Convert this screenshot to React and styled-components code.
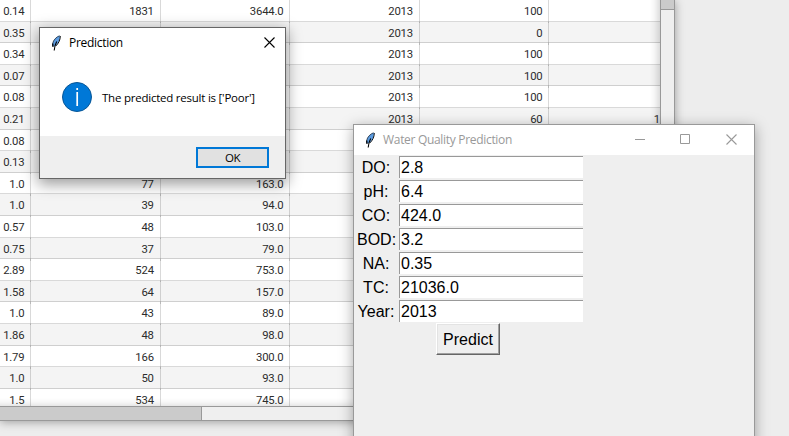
import React from "react";
import styled, { createGlobalStyle } from "styled-components";

const Global = createGlobalStyle`
  * { box-sizing: border-box; }
  html, body { margin: 0; overflow: hidden; background: #ededed; }
`;

const Desktop = styled.main`
  position: relative;
  width: 789px;
  height: 436px;
  overflow: hidden;
  background: #ededed;
`;

const TableWindow = styled.section`
  width: 675px;
  height: 421px;
  display: grid;
  grid-template-columns: 660px 14px;
  grid-template-rows: 406px 14px;
  border-right: 1px solid #999;
  border-bottom: 1px solid #999;
  box-shadow: 0 1px 9px rgba(0, 0, 0, 0.35);
  background: #efefef;
`;

const TableView = styled.div`
  overflow: hidden;
  background: #fff;
  box-shadow: inset -7px -5px 8px -5px rgba(0, 0, 0, 0.2);
`;

const Row = styled.div`
  display: grid;
  grid-template-columns: 31.4px 129.4px 129.6px 129.5px 129.6px 110.5px;
  height: 21.6px;
  background: ${(p) => (p.$odd ? "rgba(0, 0, 0, 0.043)" : "transparent")};
  border-bottom: 1px solid rgba(0, 0, 0, 0.15);
`;

const Cell = styled.div`
  padding-right: 6px;
  border-right: 1px solid rgba(0, 0, 0, 0.15);
  color: #2c2c2c;
  font: 11.3px/23px Roboto, "Liberation Sans", sans-serif;
  letter-spacing: -0.2px;
  text-align: right;
  white-space: nowrap;

  &:last-child { padding-right: 0; border-right: 0; }
`;

const VerticalTrack = styled.div`
  border-left: 1px solid #999;
  background: #efefef;
`;

const VerticalThumb = styled.div`
  height: 10px;
  background: #cbcbcb;
  border-bottom: 1px solid #999;
`;

const HorizontalTrack = styled.div`
  grid-column: 1 / -1;
  border-top: 1px solid #999;
  background: #efefef;
`;

const HorizontalThumb = styled.div`
  width: 202px;
  height: 100%;
  background: #cbcbcb;
  border-right: 1px solid #999;
`;

const Window = styled.section`
  position: absolute;
  display: flex;
  flex-direction: column;
  background: #efefef;
`;

const FormWindow = styled(Window)`
  left: 353px;
  top: 124px;
  width: 402px;
  height: 330px;
  border: 1px solid #999;
  box-shadow: 0 3px 13px rgba(0, 0, 0, 0.34);
`;

const Dialog = styled(Window)`
  left: 39px;
  top: 27px;
  width: 247px;
  height: 152px;
  border: 1px solid #666;
  box-shadow: 0 4px 14px 1px rgba(0, 0, 0, 0.4);
`;

const TitleBar = styled.header`
  display: flex;
  align-items: center;
  height: 30px;
  flex: none;
  padding-left: 8px;
  background: #fff;
`;

const Title = styled.div`
  flex: 1;
  margin-left: 5px;
  color: ${(p) => (p.$active ? "#000" : "#999")};
  font: 12px/16px "Open Sans", sans-serif;
  letter-spacing: ${(p) => (p.$active ? "-0.3px" : "-0.31px")};
  white-space: nowrap;
`;

const Control = styled.div`
  width: ${(p) => (p.$narrow ? "31px" : "45.5px")};
  height: 30px;
  padding-bottom: 1px;
  display: grid;
  place-items: center;
`;

const Form = styled.div`
  padding: 1px 0 0 3px;
`;

const Field = styled.label`
  display: grid;
  grid-template-columns: 39px 184px;
  column-gap: 3px;
  height: 24px;
  color: #000;
  font: 16px/24px "Liberation Sans", Arial, sans-serif;
`;

const FieldName = styled.span`
  padding-right: 1px;
  text-align: center;
  white-space: nowrap;
`;

const Entry = styled.input`
  width: 184px;
  height: 22px;
  padding: 0 1px;
  border: 0;
  border-top: 1px solid #999;
  border-left: 1px solid #999;
  border-radius: 0;
  outline: 0;
  background: #fff;
  color: #000;
  font: 16px/21px "Liberation Sans", Arial, sans-serif;
`;

const PredictButton = styled.button`
  display: block;
  width: 64px;
  height: 32px;
  margin: -1px 0 0 79px;
  padding: 2px 0 0;
  border: 1px solid;
  border-color: #fff #666 #666 #fff;
  box-shadow: inset -1px -1px #a0a0a0, inset 1px 1px #e3e3e3;
  background: #efefef;
  color: #000;
  font: 16px/28px "Liberation Sans", Arial, sans-serif;
`;

const DialogBody = styled.div`
  display: flex;
  align-items: center;
  height: 78px;
  padding-left: 22px;
  background: #fff;
`;

const Message = styled.div`
  margin: 1px 0 0 10px;
  color: #000;
  font: 11.5px/16px "Open Sans", sans-serif;
  letter-spacing: -0.23px;
  white-space: nowrap;
`;

const DialogFooter = styled.footer`
  display: flex;
  justify-content: flex-end;
  flex: 1;
  padding: 11px 16px 0 0;
`;

const OkButton = styled.button`
  width: 73px;
  height: 21px;
  padding: 0;
  border: 2px solid #0078d7;
  border-radius: 0;
  background: #e1e1e1;
  color: #000;
  font: 11.5px/16px "Open Sans", sans-serif;
  letter-spacing: -0.5px;
`;

const rows = [
  ["0.14", "1831", "3644.0", "2013", "100", ""],
  ["0.35", "", "", "2013", "0", ""],
  ["0.34", "", "", "2013", "100", ""],
  ["0.07", "", "", "2013", "100", ""],
  ["0.08", "", "", "2013", "100", ""],
  ["0.21", "", "", "2013", "60", "1"],
  ["0.08", "", "", "", "", ""],
  ["0.13", "", "", "", "", ""],
  ["1.0", "77", "163.0", "", "", ""],
  ["1.0", "39", "94.0", "", "", ""],
  ["0.57", "48", "103.0", "", "", ""],
  ["0.75", "37", "79.0", "", "", ""],
  ["2.89", "524", "753.0", "", "", ""],
  ["1.58", "64", "157.0", "", "", ""],
  ["1.0", "43", "89.0", "", "", ""],
  ["1.86", "48", "98.0", "", "", ""],
  ["1.79", "166", "300.0", "", "", ""],
  ["1.0", "50", "93.0", "", "", ""],
  ["1.5", "534", "745.0", "", "", ""],
];

const fields = [
  ["DO:", "2.8"],
  ["pH:", "6.4"],
  ["CO:", "424.0"],
  ["BOD:", "3.2"],
  ["NA:", "0.35"],
  ["TC:", "21036.0"],
  ["Year:", "2013"],
];

function Feather() {
  return (
    <svg width="16" height="16" viewBox="0 0 16 16">
      <path d="M12 .8C8.8 1.4 5.6 4.6 4.9 8.2L4.4 11 6.8 11.3C9.9 9.2 12 5.5 12.2 1Z" fill="#5b9be0" />
      <path d="M11.5.8C8.4 1.8 5.2 5.2 4.7 8.5V11" fill="none" stroke="#26384c" strokeWidth=".9" />
      <path d="M12.3 1C12.3 4.8 10.8 8.2 7.6 11.2" fill="none" stroke="#111" strokeWidth="1" />
      <path d="M8.7 6.5C7.3 9 6.5 11.5 6.2 15.5" fill="none" stroke="#000" strokeWidth="1.1" />
      <path d="M4.7 8.5 5 12" stroke="#000" strokeWidth="1.2" />
    </svg>
  );
}

function Cross({ color }) {
  return (
    <svg width="11" height="11" viewBox="0 0 11 11">
      <path d="M.5.5 10.5 10.5M10.5.5.5 10.5" stroke={color} strokeWidth="1.1" />
    </svg>
  );
}

export default function App() {
  return (
    <Desktop>
      <Global />
      <TableWindow>
        <TableView>
          {rows.map((row, i) => (
            <Row key={i} $odd={i % 2 === 1}>
              {row.map((value, j) => <Cell key={j}>{value}</Cell>)}
            </Row>
          ))}
        </TableView>
        <VerticalTrack><VerticalThumb /></VerticalTrack>
        <HorizontalTrack><HorizontalThumb /></HorizontalTrack>
      </TableWindow>

      <FormWindow>
        <TitleBar>
          <Feather />
          <Title>Water Quality Prediction</Title>
          <Control>
            <svg width="11" height="11"><path d="M0 5.5H10" stroke="#999" /></svg>
          </Control>
          <Control>
            <svg width="11" height="11"><path d="M.5.5H9.5V9.5H.5Z" fill="none" stroke="#999" /></svg>
          </Control>
          <Control><Cross color="#999" /></Control>
        </TitleBar>
        <Form>
          {fields.map(([name, value]) => (
            <Field key={name}>
              <FieldName>{name}</FieldName>
              <Entry defaultValue={value} />
            </Field>
          ))}
          <PredictButton>Predict</PredictButton>
        </Form>
      </FormWindow>

      <Dialog>
        <TitleBar>
          <Feather />
          <Title $active>Prediction</Title>
          <Control $narrow><Cross color="#000" /></Control>
        </TitleBar>
        <DialogBody>
          <svg width="30" height="30" viewBox="0 0 30 30">
            <circle cx="15" cy="15" r="14.5" fill="#0078d7" stroke="#085696" />
            <path d="M15.2 10V24M15.2 6V8" stroke="#fff" strokeWidth="1.7" />
          </svg>
          <Message>The predicted result is ['Poor']</Message>
        </DialogBody>
        <DialogFooter><OkButton>OK</OkButton></DialogFooter>
      </Dialog>
    </Desktop>
  );
}
